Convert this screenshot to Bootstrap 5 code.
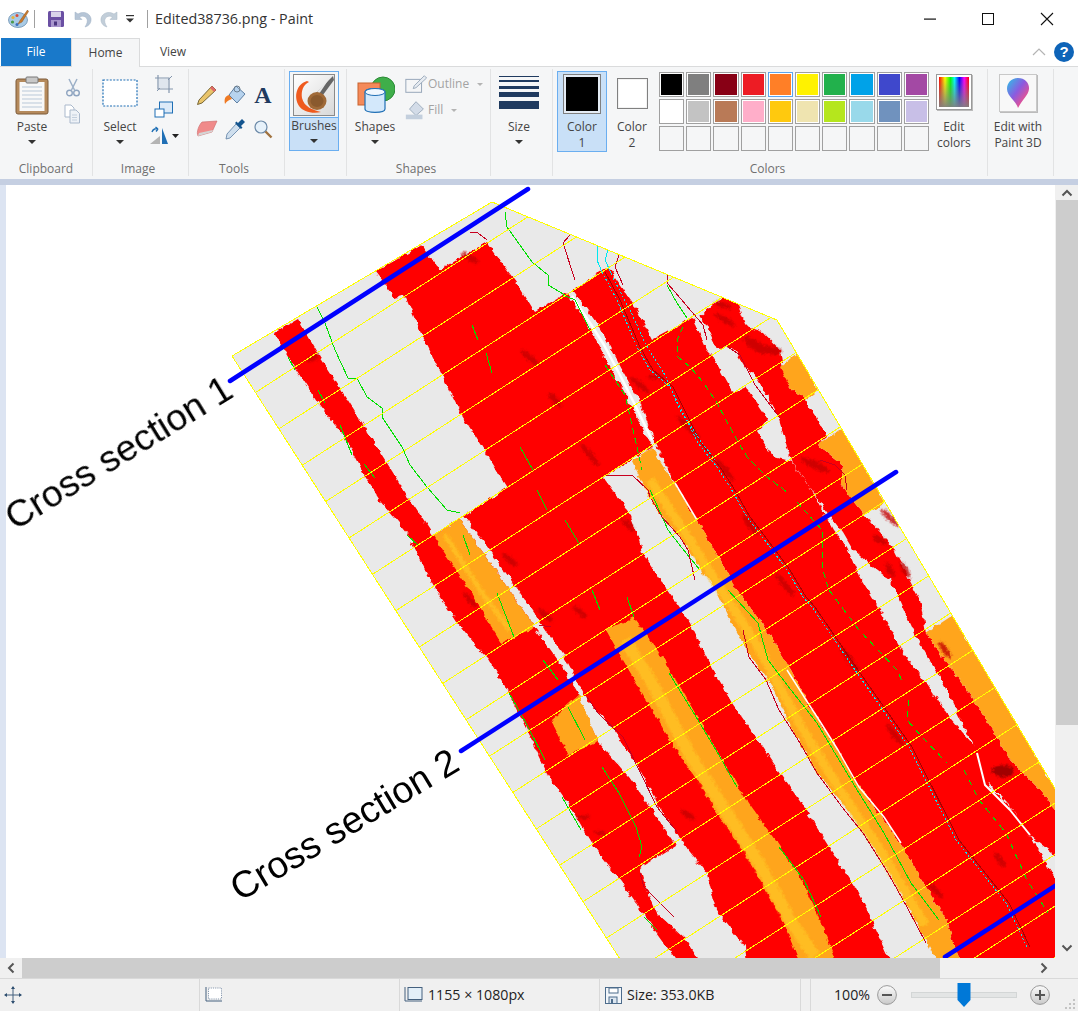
<!DOCTYPE html>
<html lang="en">
<head>
<meta charset="utf-8">
<title>Paint</title>
<link href="https://cdn.jsdelivr.net/npm/bootstrap@5.3.0/dist/css/bootstrap.min.css" rel="stylesheet">
<style>
html,body{margin:0;height:1011px;overflow:hidden;background:#fff;}
body{font-family:"Open Sans","Noto Sans",sans-serif;font-size:12px;color:#444;line-height:16px;}
svg{display:block;}
.pt-win{width:1078px;height:1011px;}
.pt-title{height:38px;}
.pt-title-txt{font-size:14.3px;color:#333;margin-left:7px;}
.pt-qat{padding-left:8px;}
.pt-sep{width:1px;height:18px;background:#a0a0a0;}
.pt-ctrl{width:58.5px;}
.pt-ctrls{margin-right:2px;}
.qa-save{margin-left:10px;}
.qa-undo{margin-left:7px;}
.qa-redo{margin-left:6px;}
.qa-drop{margin-left:3px;}
.qa-sep{margin-left:10px;}
.pt-tabs{height:28px;}
.pt-tab-file{width:70px;margin-left:1px;background:#1979ca;color:#fff;}
.pt-tab-home{width:69px;background:#f5f6f7;border:1px solid #dadbdc;border-bottom:0;margin-bottom:-1px;position:relative;z-index:1;}
.pt-tab-view{width:66px;}
.pt-ribbon{height:113px;background:#f5f6f7;border-top:1px solid #dadbdc;padding-top:2px;}
.pt-grp{height:107px;border-right:1px solid #e2e3e4;padding-top:2px;}
.pt-body{height:85px;}
.pt-lab{height:16px;margin-top:5px;text-align:center;color:#6f6f6f;}
.pt-lab-l{padding-right:5px;}
.w-clip{width:93px;} .w-img{width:96px;} .w-tool{width:96px;} .w-brush{width:62px;} .w-shape{width:144px;} .w-size{width:62px;} .w-col{width:435px;} .w-3d{width:66px;}
.pt-big{height:80px;flex:none;}
.pt-ico{height:48px;}
.pt-ln{height:16px;}
.pt-caret{width:0;height:0;border-left:4px solid transparent;border-right:4px solid transparent;border-top:4px solid #333;margin-top:5px;}
.pt-caret-g{width:0;height:0;border-left:3.5px solid transparent;border-right:3.5px solid transparent;border-top:3.5px solid #b4b4b4;}
.pt-on{background:#c9e0f7;border:1px solid #6aaef0;}
.pt-brush-top{height:46px;background:#f5f6f7;border-bottom:1px solid #6aaef0;}
.pt-small{height:26px;}
.pt-tools-wrap{padding-top:7px;padding-left:4px;}
.pt-tools{display:grid;grid-template-columns:repeat(3,28px);grid-auto-rows:34px;}
.pt-dim{color:#a3a3a3;}
.pt-swatch1{width:38px;height:40px;border:1px solid #808080;padding:2px;margin-top:2px;background:#e4ecf5;}
.pt-swatch1 i{display:block;width:100%;height:100%;background:#000;}
.pt-swatch2{width:31px;height:31px;border:1px solid #808080;background:#fff;box-shadow:inset 0 0 0 1px #f2f2f2;margin-top:7px;}
.pt-pal{display:grid;grid-template-columns:repeat(10,25.2px);grid-auto-rows:25px;gap:2px;margin-left:2px;margin-top:1px;flex:none;}
.pt-cell{border:1px solid #a0a0a0;padding:1px;background:#fff;}
.pt-cell i{display:block;width:100%;height:100%;}
.pt-cell.sel{border-color:#5aa5ee;}
.pt-cell.empty{background:#f5f6f7;}
.c0{background:#000}.c1{background:#7f7f7f}.c2{background:#880015}.c3{background:#ed1c24}.c4{background:#ff7f27}.c5{background:#fff200}.c6{background:#22b14c}.c7{background:#00a2e8}.c8{background:#3f48cc}.c9{background:#a349a4}
.d0{background:#fff}.d1{background:#c3c3c3}.d2{background:#b97a57}.d3{background:#ffaec9}.d4{background:#ffc90e}.d5{background:#efe4b0}.d6{background:#b5e61d}.d7{background:#99d9ea}.d8{background:#7092be}.d9{background:#c8bfe7}
.pt-rainbow{width:36px;height:36px;border:1px solid #9a9a9a;padding:2px;background:#fff;box-shadow:1px 1px 0 #bbb;margin-top:3px;}
.pt-rainbow i{display:block;width:100%;height:100%;background:linear-gradient(to bottom,rgba(128,128,128,0) 0%,rgba(128,128,128,.95) 100%),linear-gradient(to right,#f00,#ff0 20%,#0f0 38%,#0ff 52%,#00f 68%,#f0f 84%,#f00);}
.pt-3dbox{width:38px;height:38px;border:1px solid #c8c8c8;background:#f8f8f8;box-shadow:1px 1px 0 #bbb;margin-top:3px;}
.pt-work{height:779px;background:#dce4f2;border-top:6px solid #c5cfe2;}
.pt-canvas{width:1049px;margin-left:6px;background:#fff;height:773px;}
.pt-vbar{width:23px;background:#f0f0f0;}
.pt-vbar-top{height:15px;}
.pt-vbar-thumb{height:525px;background:#cdcdcd;margin-left:1px;}
.pt-vbar-bot{margin-top:214px;height:18px;}
.pt-hbar{height:20px;background:#f0f0f0;}
.pt-arrow{width:22px;}
.pt-hthumb{width:918px;background:#cdcdcd;}
.pt-hend{width:113px;padding-right:5px;}
.pt-status{height:33px;background:#f0f0f0;border-top:1px solid #d9d9d9;font-size:14.2px;color:#222;}
.pt-seg{width:200px;height:100%;border-right:1px solid #d9d9d9;padding-left:4px;}
.pt-seg-s{width:201px;}
.pt-seg-t{width:10px;border-right:1px solid #d9d9d9;height:100%;}
.pt-track{width:106px;height:6px;background:#e3e5e5;border:1px solid #d3d6d6;margin-left:14px;}
.pt-thumb{left:45px;top:-10px;}
.pt-plus{margin-left:13px;}
.pt-grip{margin-left:auto;margin-bottom:1px;margin-right:2px;align-self:flex-end;}
.pt-zoomtxt{width:59px;text-align:right;margin-right:7px;}
.pt-map-t{font-family:"Liberation Sans",Arial,sans-serif;font-size:37.5px;fill:#000;}
</style>
</head>
<body>
<div class="pt-win d-flex flex-column">

<!-- title bar -->
<div class="pt-title d-flex align-items-center">
  <div class="pt-qat d-flex align-items-center">
    <svg width="22" height="20" viewBox="0 0 22 20"><ellipse cx="10" cy="11" rx="9.5" ry="7.5" fill="#a9cbe6" stroke="#6b8fb0" stroke-width=".8"/><circle cx="5" cy="8.5" r="1.6" fill="#e8b23a"/><circle cx="9" cy="6.5" r="1.5" fill="#d94a3a"/><circle cx="4.5" cy="13" r="1.6" fill="#4a9a4a"/><circle cx="9" cy="15.5" r="1.5" fill="#3a6fc0"/><path d="M19.5 1 L12 11.5 L10 15 L14 13 L20.5 2.5 Z" fill="#c97a2c" stroke="#8a5520" stroke-width=".5"/></svg>
    <div class="pt-sep ms-1"></div>
    <svg class="qa-save" width="22" height="18" viewBox="0 0 22 18"><rect x="3" y="1" width="16" height="16" rx="1.5" fill="#6a4fa3"/><rect x="6" y="1.500" width="10" height="5.500" fill="#d9d3ea"/><rect x="6" y="10" width="10" height="7" fill="#a896cd"/><rect x="9" y="11.500" width="3" height="4" fill="#4b3580"/></svg>
    <svg class="qa-undo" width="20" height="20" viewBox="2 0 20 18"><path d="M3 2 L3 9.500 L10 9.500 L7.500 7 C10 5.500 13.500 6 15 9 C15.800 11 15 14 13 17 C17.500 16 19.500 12 19 8.500 C18 3.500 12 0.500 6 4 L3 2 Z" fill="#b6c5d6" stroke="#9fb0c4" stroke-width=".5"/></svg>
    <svg class="qa-redo" width="20" height="20" viewBox="4 0 20 18"><path d="M21 2 L21 9.500 L14 9.500 L16.500 7 C14 5.500 10.500 6 9 9 C8.200 11 9 14 11 17 C6.500 16 4.500 12 5 8.500 C6 3.500 12 0.500 18 4 L21 2 Z" fill="#c2ced9" stroke="#aab8c6" stroke-width=".5"/></svg>
    <svg class="qa-drop" width="14" height="10" viewBox="0 0 14 10"><rect x="3" y="1" width="8" height="1.200" fill="#333"/><path d="M3 4.500 H11 L7 8.500 Z" fill="#333"/></svg>
    <div class="pt-sep qa-sep"></div>
  </div>
  <div class="pt-title-txt">Edited38736.png - Paint</div>
  <div class="ms-auto d-flex pt-ctrls">
    <div class="pt-ctrl d-flex justify-content-center"><svg width="14" height="14" viewBox="0 0 14 14"><rect x="1" y="6.500" width="12" height="1.200" fill="#111"/></svg></div>
    <div class="pt-ctrl d-flex justify-content-center"><svg width="14" height="14" viewBox="0 0 14 14"><rect x="1.500" y="1.500" width="11" height="11" fill="none" stroke="#111" stroke-width="1"/></svg></div>
    <div class="pt-ctrl d-flex justify-content-center"><svg width="14" height="14" viewBox="0 0 14 14"><path d="M1 1 L13 13 M13 1 L1 13" stroke="#111" stroke-width="1.100"/></svg></div>
  </div>
</div>

<!-- tabs -->
<div class="pt-tabs d-flex align-items-stretch position-relative">
  <div class="pt-tab-file d-flex align-items-center justify-content-center">File</div>
  <div class="pt-tab-home d-flex align-items-center justify-content-center">Home</div>
  <div class="pt-tab-view d-flex align-items-center justify-content-center">View</div>
  <div class="ms-auto d-flex align-items-center gap-2 me-1">
    <svg width="14" height="10" viewBox="0 0 14 10"><path d="M1 8 L7 2 L13 8" fill="none" stroke="#b4b4b4" stroke-width="1.200"/></svg>
    <svg width="20" height="20" viewBox="0 0 20 20"><circle cx="10" cy="10" r="10" fill="#0e64b8"/><text x="10" y="15" text-anchor="middle" font-family="Liberation Sans, sans-serif" font-weight="700" font-size="15" fill="#fff">?</text></svg>
  </div>
</div>

<!-- ribbon -->
<div class="pt-ribbon d-flex">
  <div class="pt-grp w-clip">
    <div class="pt-body d-flex ps-1">
      <div class="pt-big d-flex flex-column align-items-center" style="width:56px">
        <div class="pt-ico d-flex align-items-center">
          <svg width="34" height="40" viewBox="0 0 34 40"><rect x="1" y="4" width="32" height="35" rx="2" fill="#b58a5c" stroke="#7c5b39"/><rect x="4.500" y="7" width="25" height="29" fill="#f8f8f8"/><g stroke="#b9c8d8"><path d="M7 12H27M7 16H27M7 20H27M7 24H27M7 28H27M7 32H27"/></g><rect x="11" y="2" width="12" height="6" rx="1" fill="#c8c8c8" stroke="#777"/></svg>
        </div>
        <div class="pt-ln">Paste</div><div class="pt-caret"></div>
      </div>
      <div class="d-flex flex-column align-items-center ms-1">
        <div class="pt-small d-flex align-items-center mt-1"><svg width="14" height="20" viewBox="0 0 14 20"><path d="M3 1 L8.500 12 M11 1 L5.500 12" stroke="#9cb0c8" stroke-width="1.500"/><circle cx="3.500" cy="15" r="2.800" fill="none" stroke="#8ea4c0" stroke-width="1.400"/><circle cx="10.500" cy="15" r="2.800" fill="none" stroke="#8ea4c0" stroke-width="1.400"/></svg></div>
        <div class="pt-small d-flex align-items-center"><svg width="17" height="20" viewBox="0 0 17 20"><path d="M1 1H7L10 4V13H1Z" fill="#fff" stroke="#aab9cc"/><path d="M6 6H12L15.500 9.500V19H6Z" fill="#eef2f7" stroke="#aab9cc"/><path d="M8 11H13M8 13.500H13M8 16H13" stroke="#c3cfdd"/></svg></div>
      </div>
    </div>
    <div class="pt-lab">Clipboard</div>
  </div>

  <div class="pt-grp w-img">
    <div class="pt-body d-flex ps-1">
      <div class="pt-big d-flex flex-column align-items-center" style="width:46px">
        <div class="pt-ico d-flex align-items-start pt-2"><svg width="36" height="28" viewBox="0 0 36 28"><rect x="1" y="1" width="34" height="26" fill="#fff" stroke="#1f6fb5" stroke-width="1.200" stroke-dasharray="2 1.400"/></svg></div>
        <div class="pt-ln">Select</div><div class="pt-caret"></div>
      </div>
      <div class="d-flex flex-column align-items-center ms-1" style="width:34px">
        <div class="pt-small d-flex align-items-center"><svg width="20" height="20" viewBox="0 0 20 20"><path d="M4 1V15H19M1 4H15V19" fill="none" stroke="#8496ad" stroke-width="1.200"/><path d="M3 17 L18 2" stroke="#8496ad" stroke-width="1"/><rect x="5" y="5" width="9" height="9" fill="#dfe6ee"/></svg></div>
        <div class="pt-small d-flex align-items-center"><svg width="20" height="18" viewBox="0 0 20 18"><rect x="5.500" y="1" width="13" height="11" fill="#dceaf8" stroke="#1f6fb5"/><rect x="1" y="8" width="9" height="8" fill="#fff" stroke="#1f6fb5"/></svg></div>
        <div class="pt-small d-flex align-items-center"><svg width="30" height="20" viewBox="0 0 30 20"><path d="M1 18 L11 10 V18 Z" fill="#b4b4b4"/><path d="M13 2 L19 18 H13 Z" fill="#1f6fb5"/><path d="M3 6 C4 3 7 2 9 3 M9 3 L6.500 1 M9 3 L7 5.500" stroke="#1f6fb5" fill="none" stroke-width="1.400"/><path d="M23 8 H30 L26.500 12 Z" fill="#222"/></svg></div>
      </div>
    </div>
    <div class="pt-lab pt-lab-l">Image</div>
  </div>

  <div class="pt-grp w-tool">
    <div class="pt-body pt-tools-wrap">
      <div class="pt-tools">
        <div class="d-flex align-items-center justify-content-center"><svg width="22" height="22" viewBox="0 0 22 22"><path d="M16 2 L20 6 L6 19 L1.500 20.500 L3 16 Z" fill="#e9c46a" stroke="#6b5a2a" stroke-width=".9"/><path d="M16 2 L20 6 L18 8 L14 4 Z" fill="#e06a6a"/></svg></div>
        <div class="d-flex align-items-center justify-content-center"><svg width="22" height="22" viewBox="0 0 22 22"><path d="M12 2 L21 10 L13 19 L5 11 Z" fill="#b7d3ee" stroke="#5d7fa3"/><path d="M5 11 C1 12 0 15 1 20 C3 17 5 16 8 15 Z" fill="#ef7a24"/><circle cx="13" cy="5" r="3" fill="none" stroke="#6b7f90"/></svg></div>
        <div class="d-flex align-items-center justify-content-center"><svg width="24" height="28" viewBox="0 0 24 28"><text x="12" y="22" text-anchor="middle" font-family="Liberation Serif, serif" font-weight="700" font-size="24" fill="#1f3a5f">A</text></svg></div>
        <div class="d-flex align-items-center justify-content-center"><svg width="22" height="18" viewBox="0 0 22 18"><path d="M6 2 L21 1 L16 12 L2 16 C0 12 3 5 6 2 Z" fill="#f08a8a" stroke="#c96a6a" stroke-width=".6"/><path d="M2 16 L16 12 L17 10 L3 13 Z" fill="#d5d5d5"/></svg></div>
        <div class="d-flex align-items-center justify-content-center"><svg width="22" height="22" viewBox="0 0 22 22"><path d="M12 6 L16 10 L6 20 L2 21 L3 16 Z" fill="#cfdfee" stroke="#5d7fa3" stroke-width=".8"/><path d="M11 5 L17 11 L18.500 9.500 L17 8 L21 4 L18 1 L14 5 L12.500 3.500 Z" fill="#14558f"/></svg></div>
        <div class="d-flex align-items-center justify-content-center"><svg width="20" height="20" viewBox="0 0 20 20"><circle cx="8" cy="8" r="6" fill="#e6f1fa" stroke="#6b89a8" stroke-width="1.200"/><path d="M12.500 12.500 L18.500 18.500" stroke="#a0723f" stroke-width="2.400"/></svg></div>
      </div>
    </div>
    <div class="pt-lab pt-lab-l">Tools</div>
  </div>

  <div class="pt-grp w-brush">
    <div class="pt-body ps-1">
      <div class="pt-big pt-on" style="width:50px">
        <div class="pt-brush-top d-flex align-items-center justify-content-center">
          <svg width="42" height="42" viewBox="0 0 42 42"><defs><linearGradient id="brushbg" x1="0" y1="0" x2="1" y2="1"><stop offset="0" stop-color="#fff"/><stop offset="1" stop-color="#d8d8d8"/></linearGradient></defs><rect x=".5" y=".5" width="41" height="41" fill="url(#brushbg)" stroke="#8a8a8a"/><path d="M40 2 L22 20 L27 25 L41 6 Z" fill="#666"/><path d="M38 2 L24 18 L26 20 Z" fill="#e8e8e8"/><path d="M14 7 C4 10 0 22 6 32 C10 38 20 40 28 38 C20 36 11 33 9 24 C8 17 10 11 16 8 Z" fill="#ef5a1e"/><ellipse cx="24" cy="27" rx="9.500" ry="9" fill="#a06a38"/><ellipse cx="24" cy="27" rx="6.500" ry="6" fill="#8a5a2e"/></svg>
        </div>
        <div class="d-flex flex-column align-items-center">
          <div class="pt-ln">Brushes</div><div class="pt-caret"></div>
        </div>
      </div>
    </div>
    <div class="pt-lab"></div>
  </div>

  <div class="pt-grp w-shape">
    <div class="pt-body d-flex" style="padding-left:3px">
      <div class="pt-big d-flex flex-column align-items-center" style="width:50px">
        <div class="pt-ico d-flex align-items-center"><svg width="40" height="40" viewBox="0 0 40 40"><circle cx="28" cy="14" r="12" fill="#3fae4a" stroke="#2a8a36"/><rect x="3" y="8" width="22" height="22" fill="#f58a5a" stroke="#c8622f"/><path d="M10 17 C10 12.500 30 12.500 30 17 V34 C30 38.500 10 38.500 10 34 Z" fill="#d3e8fb" stroke="#1f6fb5" stroke-width="1.200"/><ellipse cx="20" cy="17" rx="10" ry="3.500" fill="#f0f7fe" stroke="#1f6fb5"/></svg></div>
        <div class="pt-ln">Shapes</div><div class="pt-caret"></div>
      </div>
      <div class="d-flex flex-column ps-1">
        <div class="pt-small d-flex align-items-center pt-dim"><svg width="24" height="20" viewBox="0 0 26 20"><rect x="2" y="5" width="17" height="14" fill="none" stroke="#9aa9bb" stroke-width="1.100"/><path d="M22 1 L24.500 3.500 L13 14 L10 15 L11 12 Z" fill="#e6ebf1" stroke="#9aa9bb"/></svg><span>Outline</span><span class="pt-caret-g ms-2"></span></div>
        <div class="pt-small d-flex align-items-center pt-dim"><svg width="24" height="22" viewBox="0 0 26 22"><path d="M13 2 L21 10 L13 17 L6 10 Z" fill="#d3dce8" stroke="#9aa9bb"/><rect x="2" y="16" width="18" height="5" fill="#c3cfdd"/></svg><span>Fill</span><span class="pt-caret-g ms-2"></span></div>
      </div>
    </div>
    <div class="pt-lab pt-lab-l">Shapes</div>
  </div>

  <div class="pt-grp w-size">
    <div class="pt-body ps-1">
      <div class="pt-big d-flex flex-column align-items-center" style="width:48px">
        <div class="pt-ico"><svg width="40" height="40" viewBox="0 0 40 40"><g fill="#1f3a5f"><rect y="5" width="40" height="1"/><rect y="9" width="40" height="2"/><rect y="15" width="40" height="3"/><rect y="21" width="40" height="5"/><rect y="30" width="40" height="8"/></g></svg></div>
        <div class="pt-ln">Size</div><div class="pt-caret"></div>
      </div>
    </div>
    <div class="pt-lab"></div>
  </div>

  <div class="pt-grp w-col">
    <div class="pt-body d-flex ps-1">
      <div class="pt-big pt-on d-flex flex-column align-items-center" style="width:50px;height:81px">
        <div class="pt-ico"><div class="pt-swatch1"><i></i></div></div>
        <div class="pt-ln">Color</div><div class="pt-ln">1</div>
      </div>
      <div class="pt-big d-flex flex-column align-items-center" style="width:48px;margin-left:1px;margin-right:1px">
        <div class="pt-ico"><div class="pt-swatch2"></div></div>
        <div class="pt-ln">Color</div><div class="pt-ln">2</div>
      </div>
      <div class="pt-pal">
        <div class="pt-cell"><i class="c0"></i></div><div class="pt-cell"><i class="c1"></i></div><div class="pt-cell"><i class="c2"></i></div><div class="pt-cell"><i class="c3"></i></div><div class="pt-cell sel"><i class="c4"></i></div><div class="pt-cell"><i class="c5"></i></div><div class="pt-cell"><i class="c6"></i></div><div class="pt-cell"><i class="c7"></i></div><div class="pt-cell"><i class="c8"></i></div><div class="pt-cell"><i class="c9"></i></div>
        <div class="pt-cell"><i class="d0"></i></div><div class="pt-cell"><i class="d1"></i></div><div class="pt-cell"><i class="d2"></i></div><div class="pt-cell"><i class="d3"></i></div><div class="pt-cell"><i class="d4"></i></div><div class="pt-cell"><i class="d5"></i></div><div class="pt-cell"><i class="d6"></i></div><div class="pt-cell"><i class="d7"></i></div><div class="pt-cell"><i class="d8"></i></div><div class="pt-cell"><i class="d9"></i></div>
        <div class="pt-cell empty"></div><div class="pt-cell empty"></div><div class="pt-cell empty"></div><div class="pt-cell empty"></div><div class="pt-cell empty"></div><div class="pt-cell empty"></div><div class="pt-cell empty"></div><div class="pt-cell empty"></div><div class="pt-cell empty"></div><div class="pt-cell empty"></div>
      </div>
      <div class="pt-big d-flex flex-column align-items-center" style="width:50px">
        <div class="pt-ico"><div class="pt-rainbow"><i></i></div></div>
        <div class="pt-ln">Edit</div><div class="pt-ln">colors</div>
      </div>
    </div>
    <div class="pt-lab pt-lab-l">Colors</div>
  </div>

  <div class="pt-grp w-3d">
    <div class="pt-body">
      <div class="pt-big d-flex flex-column align-items-center" style="width:60px">
        <div class="pt-ico"><div class="pt-3dbox d-flex align-items-center justify-content-center"><svg width="24" height="32" viewBox="0 0 24 32"><defs><linearGradient id="drop3d" x1="0" y1="0" x2="1" y2="1"><stop offset="0" stop-color="#29c5e8"/><stop offset=".45" stop-color="#8a5be0"/><stop offset=".8" stop-color="#f0508a"/><stop offset="1" stop-color="#f5a020"/></linearGradient></defs><path d="M12 1 C19 1 23.500 6 23 12 C22.500 18 16 23 12 31 C10 24 1 19 1 12 C1 6 5 1 12 1 Z" fill="url(#drop3d)"/></svg></div></div>
        <div class="pt-ln">Edit with</div><div class="pt-ln">Paint 3D</div>
      </div>
    </div>
    <div class="pt-lab"></div>
  </div>
</div>

<!-- workspace -->
<div class="pt-work d-flex">
  <div class="pt-canvas">
    <svg width="1049" height="773" viewBox="6 185 1049 773">
      <defs>
        <clipPath id="mapclip"><polygon points="232,356 492,202 777,320 1299,1200 775,1200"/></clipPath>
        <filter id="rough" x="-3%" y="-3%" width="106%" height="106%"><feTurbulence type="fractalNoise" baseFrequency="0.16" numOctaves="2" seed="7" result="n"/><feDisplacementMap in="SourceGraphic" in2="n" scale="6" xChannelSelector="R" yChannelSelector="G"/></filter>
        <filter id="soft" x="-20%" y="-20%" width="140%" height="140%"><feGaussianBlur stdDeviation="1.200" result="b"/><feTurbulence type="fractalNoise" baseFrequency="0.3" numOctaves="2" seed="3" result="n"/><feDisplacementMap in="b" in2="n" scale="5" xChannelSelector="R" yChannelSelector="G"/></filter>
      </defs>
      <g clip-path="url(#mapclip)">
        <polygon points="232,356 492,202 777,320 1299,1200 775,1200" fill="#e9e9e9"/>
        <g filter="url(#rough)">
          <g fill="#ff0000">
            <polygon points="274,333 288,357 317,402 345,438 365,477 380,500 407,533 420,560 435,588 457,622 474,643 488,658 505,687 522,720 547,773 568,803 594,847 621,882 644,915 669,950 680,965 702,965 686,940 657,913 645,885 640,868 676,845 652,810 629,777 598,742 577,693 560,663 535,628 503,580 459,519 433,535 410,500 387,463 363,425 340,388 317,352 298,319"/>
            <polygon points="375,272 422,245 440,270 487,242 507,270 517,283 535,312 567,293 590,328 610,367 632,407 650,443 653,447 603,477 620,500 630,513 643,553 667,590 690,623 711,667 732,703 758,740 783,777 806,810 829,847 855,887 867,910 892,965 747,965 745,947 716,910 707,873 686,847 661,810 640,770 612,727 589,703 568,663 539,620 511,580 464,515 507,488 485,452 462,415 442,375 423,337 405,295 395,298"/>
            <polygon points="573,290 608,267 633,303 652,340 693,318 707,350 712,355 733,393 746,387 768,420 757,432 773,457 792,462 813,493 833,530 847,547 860,577 884,617 901,650 926,683 951,720 977,750 989,787 1010,807 1031,837 1048,867 1065,890 1065,965 960,965 947,920 922,880 905,850 884,820 855,780 833,743 808,703 791,670 762,623 737,590 720,560 697,520 677,487 656,445 640,403 618,362 598,325"/>
            <polygon points="723,297 737,302 745,323 750,328 763,332 780,350 782,363 790,387 805,400 817,417 827,437 818,445 843,465 840,483 853,500 865,515 893,547 913,587 920,600 926,633 947,663 972,697 993,730 1010,760 1040,790 1065,820 1065,860 1057,857 1027,833 1008,803 985,780 974,747 943,683 916,637 890,580 873,567 853,550 843,533 823,507 793,463 790,457 777,413 757,377 745,367 733,347 717,348 707,327 700,315"/>
          </g>
          <g fill="#ffa51e">
            <polygon points="433,535 459,519 503,580 535,628 501,643 475,600 463,580"/>
            <polygon points="551,720 579,695 598,742 568,755"/>
            <polygon points="606,630 634,617 653,643 678,683 703,727 724,763 749,803 775,840 800,877 817,913 838,965 800,965 783,920 766,890 745,853 720,817 699,783 674,747 648,703 623,660"/>
            <polygon points="632,462 652,448 677,487 697,520 720,560 737,590 762,623 791,670 808,703 833,743 855,780 884,820 905,850 922,880 947,920 960,965 939,965 922,933 905,900 892,873 867,833 846,807 815,770 791,727 770,683 749,653 732,623 711,580 703,573 693,557 680,537 663,520 647,493"/>
            <polygon points="780,367 797,353 818,390 805,400 790,387"/>
            <polygon points="818,445 842,428 863,465 885,503 865,515 853,500 840,483 843,465"/>
            <polygon points="926,633 953,615 1065,805 1065,820 1040,790 1010,760 993,730 972,697 947,663"/>
          </g>
        </g>
        <g fill="none" stroke="#ffbd20" stroke-linejoin="round" filter="url(#soft)">
          <polyline stroke-width="12" points="625,640 650,680 690,755 725,810 760,865 790,920 815,957"/>
          <polyline stroke-width="9" points="650,480 680,525 715,580 760,650 800,725 840,790 880,850 925,925"/>
          <polyline stroke-width="5" points="445,535 480,590 510,630"/>
        </g>
        <g filter="url(#soft)" fill="#c40000" opacity=".8">
          <ellipse cx="470" cy="258" rx="10" ry="3" transform="rotate(30 470 258)"/>
          <ellipse cx="313" cy="358" rx="7" ry="3" transform="rotate(-30 313 358)"/>
          <ellipse cx="530" cy="358" rx="12" ry="3" transform="rotate(40 530 358)"/>
          <ellipse cx="555" cy="400" rx="10" ry="3" transform="rotate(50 555 400)"/>
          <ellipse cx="590" cy="455" rx="14" ry="3" transform="rotate(50 590 455)"/>
          <ellipse cx="628" cy="525" rx="8" ry="3" transform="rotate(45 628 525)"/>
          <ellipse cx="723" cy="305" rx="9" ry="3" transform="rotate(20 723 305)"/>
          <ellipse cx="725" cy="320" rx="12" ry="3" transform="rotate(30 725 320)"/>
          <ellipse cx="755" cy="345" rx="14" ry="5" transform="rotate(35 755 345)"/>
          <ellipse cx="770" cy="350" rx="12" ry="4" transform="rotate(10 770 350)"/>
          <ellipse cx="815" cy="465" rx="16" ry="4" transform="rotate(25 815 465)"/>
          <ellipse cx="655" cy="377" rx="8" ry="2.500"/>
          <ellipse cx="640" cy="385" rx="12" ry="3" transform="rotate(40 640 385)"/>
          <ellipse cx="688" cy="427" rx="16" ry="3" transform="rotate(45 688 427)"/>
          <ellipse cx="725" cy="470" rx="14" ry="3" transform="rotate(50 725 470)"/>
          <ellipse cx="750" cy="525" rx="12" ry="3" transform="rotate(55 750 525)"/>
          <ellipse cx="785" cy="585" rx="14" ry="3" transform="rotate(50 785 585)"/>
          <ellipse cx="890" cy="518" rx="12" ry="3" transform="rotate(45 890 518)"/>
          <ellipse cx="880" cy="540" rx="9" ry="3" transform="rotate(30 880 540)"/>
          <ellipse cx="890" cy="570" rx="8" ry="3" transform="rotate(60 890 570)"/>
          <ellipse cx="905" cy="570" rx="9" ry="3" transform="rotate(60 905 570)"/>
          <ellipse cx="850" cy="660" rx="16" ry="3" transform="rotate(55 850 660)"/>
          <ellipse cx="895" cy="735" rx="14" ry="3" transform="rotate(50 895 735)"/>
          <ellipse cx="945" cy="650" rx="10" ry="3" transform="rotate(55 945 650)"/>
          <ellipse cx="1003" cy="771" rx="11" ry="6" fill="#8a0000"/>
          <ellipse cx="935" cy="890" rx="11" ry="3" transform="rotate(45 935 890)"/>
          <ellipse cx="1000" cy="860" rx="9" ry="3" transform="rotate(50 1000 860)"/>
          <ellipse cx="583" cy="817" rx="7" ry="2.500"/>
          <ellipse cx="600" cy="833" rx="6" ry="2"/>
          <ellipse cx="688" cy="815" rx="8" ry="3" transform="rotate(30 688 815)"/>
          <ellipse cx="580" cy="612" rx="9" ry="3" transform="rotate(40 580 612)"/>
          <ellipse cx="470" cy="600" rx="10" ry="2.500" transform="rotate(50 470 600)"/>
          <ellipse cx="545" cy="615" rx="10" ry="3" transform="rotate(40 545 615)"/>
          <ellipse cx="510" cy="560" rx="10" ry="3" transform="rotate(40 510 560)"/>
        </g>
        <g fill="none" stroke="#fff" stroke-linejoin="round">
          <polyline stroke-width="2.500" points="572,296 592,326 604,345 620,375 635,405 652,440"/>
          <polyline stroke-width="1.500" points="675,483 697,520"/>
          <polyline stroke-width="1.500" points="787,670 808,703 821,723 838,750 859,787 884,817 901,843"/>
          <polyline stroke-width="2" points="977,753 985,785 1010,810 1030,835"/>
        </g>
        <g fill="none" stroke-width="1" shape-rendering="crispEdges">
          <g stroke="#00e000">
            <polyline points="317,307 325,323 335,350 348,378 357,378 367,397 382,408 382,417 402,447 410,465 427,487 447,510 460,513"/>
            <polyline points="505,212 507,227 532,262 548,275 548,285 565,295"/>
            <polyline points="667,285 677,303 687,318"/>
            <polyline points="288,357 295,370"/>
            <polyline points="318,390 325,403"/>
            <polyline points="340,425 352,455"/>
            <polyline points="364,464 375,478"/>
            <polyline points="407,535 418,545"/>
            <polyline points="463,535 470,555"/>
            <polyline points="497,593 514,637"/>
            <polyline points="543,660 558,680"/>
            <polyline points="568,707 585,740"/>
            <polyline points="602,767 619,793 636,827 642,847 639,857"/>
            <polyline stroke-dasharray="6 4" points="683,327 677,340 678,357 690,367 703,382 717,403 733,433 747,457 767,477 787,492"/>
            <polyline stroke-dasharray="6 4" points="797,502 822,530 822,567 828,587"/>
            <polyline stroke-dasharray="8 5" points="472,325 477,338"/>
            <polyline points="472,325 478,340"/>
            <polyline points="486,353 492,373"/>
            <polyline points="520,447 533,470"/>
            <polyline points="537,490 547,510"/>
            <polyline points="565,520 580,545"/>
            <polyline points="592,590 600,610"/>
            <polyline points="627,597 634,617"/>
            <polyline points="563,295 575,300 590,330"/>
            <polyline stroke-dasharray="6 4" points="605,365 625,395 632,425 642,470"/>
            <polyline points="669,673 690,707 716,750 737,787"/>
            <polyline points="779,847 804,880 821,917"/>
            <polyline points="728,590 758,623 768,660 791,690 817,723 833,750 859,793 884,833 897,857 911,883 939,920"/>
            <polyline points="650,490 668,530 682,548 700,570"/>
            <polyline stroke-dasharray="6 5" points="829,590 859,630 897,670 903,683"/>
            <polyline stroke-dasharray="6 5" points="909,700 907,720 922,737 947,763"/>
            <polyline stroke-dasharray="6 5" points="964,770 979,800 1006,833 1027,880 1048,913"/>
            <polyline points="509,693 526,723 545,760"/>
            <polyline points="562,797 581,830"/>
            <polyline points="644,917 657,930"/>
          </g>
          <g stroke="#c8001e">
            <polyline points="570,235 563,243 575,280"/>
            <polyline points="619,255 615,267 623,285"/>
            <polyline points="668,275 667,283 675,292 703,325 707,340"/>
            <polyline points="470,232 478,233 487,240"/>
            <polyline points="605,475 632,475 648,490 650,497 662,517 680,537 688,550 695,580"/>
            <polyline points="725,345 740,355 755,385 780,418"/>
            <polyline points="539,625 551,627"/>
            <polyline points="587,697 598,713 623,737 657,807 678,833"/>
            <polyline points="640,873 644,887 674,917"/>
            <polyline points="743,630 749,657 766,680 779,710 800,743 817,773 842,807 863,833 888,873 907,907 926,943"/>
            <polyline points="820,460 835,465 845,475 847,490"/>
            <polyline stroke="#a80000" points="605,272 620,300 640,347 653,370 673,387 693,427 701,443 720,467 733,487 750,517 770,543 790,570 806,597 815,607 858,670 912,747 959,840 1009,903 1030,947"/>
          </g>
          <g stroke="#00e8f0">
            <polyline points="597,245 597,260 602,272"/>
            <polyline points="608,250 605,260 612,275"/>
            <polyline stroke-dasharray="2 2" points="602,272 617,300 637,347 650,370 670,387 690,427 698,443 717,467 730,487 747,517 767,543 787,570 803,597 812,607 855,670 909,747 956,840 1006,903 1027,947"/>
            <polyline stroke-dasharray="2 2" points="613,278 630,310 646,345 665,375 680,410 700,440 715,460"/>
          </g>
        </g>
        <g stroke="#ffff00" stroke-width="1" shape-rendering="crispEdges">
          <line x1="200" y1="428.300" x2="1100" y2="-152.200"/>
          <line x1="200" y1="479.700" x2="1100" y2="-100.800"/>
          <line x1="200" y1="531.200" x2="1100" y2="-49.300"/>
          <line x1="200" y1="582.600" x2="1100" y2="2.100"/>
          <line x1="200" y1="634.100" x2="1100" y2="53.600"/>
          <line x1="200" y1="685.600" x2="1100" y2="105.100"/>
          <line x1="200" y1="737" x2="1100" y2="156.500"/>
          <line x1="200" y1="788.500" x2="1100" y2="208"/>
          <line x1="200" y1="840" x2="1100" y2="259.400"/>
          <line x1="200" y1="891.400" x2="1100" y2="310.900"/>
          <line x1="200" y1="942.900" x2="1100" y2="362.400"/>
          <line x1="200" y1="994.300" x2="1100" y2="413.800"/>
          <line x1="200" y1="1045.800" x2="1100" y2="465.300"/>
          <line x1="200" y1="1097.200" x2="1100" y2="516.700"/>
          <line x1="200" y1="1148.700" x2="1100" y2="568.200"/>
          <line x1="200" y1="1200.200" x2="1100" y2="619.700"/>
          <line x1="200" y1="1251.600" x2="1100" y2="671.100"/>
          <line x1="200" y1="1303.100" x2="1100" y2="722.600"/>
          <line x1="200" y1="1354.500" x2="1100" y2="774"/>
          <line x1="200" y1="1406" x2="1100" y2="825.500"/>
          <line x1="200" y1="1457.500" x2="1100" y2="877"/>
          <line x1="200" y1="1508.900" x2="1100" y2="928.400"/>
        </g>
      </g>
      <polygon points="232,356 492,202 777,320 1299,1200 775,1200" fill="none" stroke="#ffff00" stroke-width="1" shape-rendering="crispEdges"/>
      <g stroke="#0000ff" stroke-width="4.500" stroke-linecap="round">
        <line x1="230" y1="381" x2="528" y2="189"/>
        <line x1="461" y1="751" x2="896" y2="472"/>
        <line x1="945" y1="957" x2="1058" y2="884"/>
      </g>
      <text class="pt-map-t" transform="translate(15,531) rotate(-31.500)">Cross section 1</text>
      <text class="pt-map-t" transform="translate(240,902) rotate(-31)">Cross section 2</text>
    </svg>
  </div>
  <div class="pt-vbar flex-grow-1">
    <div class="pt-vbar-top d-flex align-items-center justify-content-center"><svg width="12" height="8" viewBox="0 0 12 8"><path d="M1.500 6.500 L6 2 L10.500 6.500" fill="none" stroke="#555" stroke-width="2"/></svg></div>
    <div class="pt-vbar-thumb"></div>
    <div class="pt-vbar-bot d-flex align-items-center justify-content-center"><svg width="12" height="8" viewBox="0 0 12 8"><path d="M1.500 1.500 L6 6 L10.500 1.500" fill="none" stroke="#555" stroke-width="2"/></svg></div>
  </div>
</div>

<!-- horizontal scroll -->
<div class="pt-hbar d-flex">
  <div class="pt-arrow d-flex align-items-center justify-content-center"><svg width="8" height="12" viewBox="0 0 8 12"><path d="M6.500 1.500 L2 6 L6.500 10.500" fill="none" stroke="#555" stroke-width="2"/></svg></div>
  <div class="pt-hthumb"></div>
  <div class="pt-hend d-flex align-items-center justify-content-end"><svg width="8" height="12" viewBox="0 0 8 12"><path d="M1.500 1.500 L6 6 L1.500 10.500" fill="none" stroke="#555" stroke-width="2"/></svg></div>
</div>

<!-- status bar -->
<div class="pt-status d-flex align-items-center">
  <div class="pt-seg d-flex align-items-center"><svg width="18" height="18" viewBox="0 0 18 18"><path d="M9 1V17M1 9H17" stroke="#44607e" stroke-width="1"/><path d="M9 0 L11 3 H7 Z M9 18 L11 15 H7 Z M0 9 L3 7 V11 Z M18 9 L15 7 V11 Z" fill="#2f4f70"/></svg></div>
  <div class="pt-seg d-flex align-items-center"><svg width="20" height="18" viewBox="0 0 20 18"><path d="M2 1 V15 H18" fill="none" stroke="#44607e"/><rect x="4.500" y="2" width="13" height="11" fill="#fff" stroke="#8a9bb0" stroke-dasharray="1.200 1"/></svg></div>
  <div class="pt-seg d-flex align-items-center"><svg width="20" height="18" viewBox="0 0 20 18"><path d="M1 1 V15 H18" fill="none" stroke="#44607e"/><rect x="4" y="1.500" width="14" height="12" fill="#e3eff8" stroke="#44607e"/></svg><span class="ms-1">1155 × 1080px</span></div>
  <div class="pt-seg pt-seg-s d-flex align-items-center"><svg width="19" height="19" viewBox="0 0 19 19"><rect x="1.500" y="1.500" width="16" height="16" fill="#f2f6fa" stroke="#4d6c8c"/><rect x="5" y="2" width="9" height="5" fill="#fff" stroke="#4d6c8c"/><rect x="5" y="11" width="8" height="6.500" fill="#dce6f0" stroke="#4d6c8c"/><rect x="7" y="13" width="2" height="4" fill="#4d6c8c"/></svg><span class="ms-1">Size: 353.0KB</span></div>
  <div class="pt-seg-t"></div>
  <div class="pt-zoomtxt">100%</div>
  <svg width="20" height="20" viewBox="0 0 20 20"><defs><linearGradient id="zbtn" x1="0" y1="0" x2="0" y2="1"><stop offset="0" stop-color="#fbfbfb"/><stop offset="1" stop-color="#c9c9c9"/></linearGradient></defs><circle cx="10" cy="10" r="9.400" fill="url(#zbtn)" stroke="#9a9a9a"/><rect x="5" y="9" width="10" height="2" fill="#555"/></svg>
  <div class="pt-track position-relative">
    <svg class="position-absolute pt-thumb" width="14" height="24" viewBox="0 0 14 24"><path d="M0.500 0 H13.500 V17 L7 24 L0.500 17 Z" fill="#0078d7"/></svg>
  </div>
  <svg class="pt-plus" width="20" height="20" viewBox="0 0 20 20"><circle cx="10" cy="10" r="9.400" fill="url(#zbtn)" stroke="#9a9a9a"/><rect x="5" y="9" width="10" height="2" fill="#555"/><rect x="9" y="5" width="2" height="10" fill="#555"/></svg>
  <svg class="pt-grip" width="12" height="12" viewBox="0 0 12 12"><g fill="#c3c3c3"><rect x="9" y="1" width="2" height="2"/><rect x="5" y="5" width="2" height="2"/><rect x="9" y="5" width="2" height="2"/><rect x="1" y="9" width="2" height="2"/><rect x="5" y="9" width="2" height="2"/><rect x="9" y="9" width="2" height="2"/></g></svg>
</div>
</div>
<script src="https://cdn.jsdelivr.net/npm/bootstrap@5.3.0/dist/js/bootstrap.bundle.min.js"></script>
</body>
</html>
